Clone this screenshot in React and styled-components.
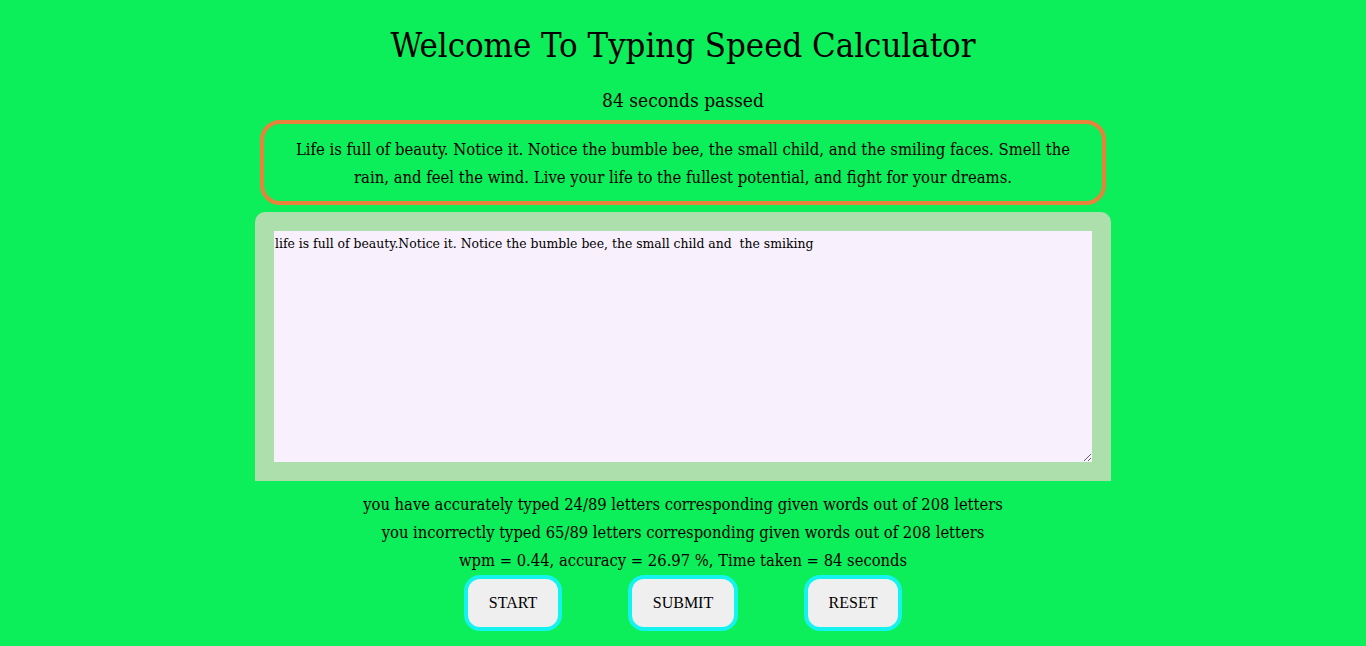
import React from "react";
import styled, { createGlobalStyle } from "styled-components";

const Global = createGlobalStyle`
  html, body { margin: 0; padding: 0; background: #0cef5b; }
  body { font-family: "DejaVu Serif", serif; font-stretch: condensed; color: #000; }
`;

const Page = styled.div`
  display: flex;
  flex-direction: column;
  align-items: center;
  padding-top: 22px;
`;

const Title = styled.h1`
  margin: 0;
  font-size: 34.4px;
  font-weight: 400;
  line-height: 46px;
`;

const Timer = styled.div`
  margin-top: 20px;
  font-size: 19px;
  line-height: 24px;
`;

const Quote = styled.div`
  margin-top: 8px;
  width: 846px;
  box-sizing: border-box;
  border: 4px solid #e8823a;
  border-radius: 20px;
  padding: 12px 28px 9px;
  text-align: center;
  font-size: 16.5px;
  line-height: 28px;
`;

const Panel = styled.div`
  margin-top: 7px;
  width: 856px;
  box-sizing: border-box;
  background: #addfad;
  border-radius: 10px 10px 0 0;
  padding: 19px;
  display: flex;
`;

const Area = styled.textarea`
  flex: 1;
  height: 231px;
  box-sizing: border-box;
  margin: 0;
  background: #f8f0fc;
  border: none;
  outline: none;
  padding: 3px 1px;
  font-family: "DejaVu Serif", serif;
  font-stretch: condensed;
  font-size: 13.8px;
  line-height: 18px;
  color: #000;
  resize: both;
`;

const Results = styled.div`
  margin-top: 10px;
  text-align: center;
  font-size: 16.4px;
  line-height: 28px;
`;

const Buttons = styled.div`
  display: flex;
  gap: 66px;
  margin-top: 0;
`;

const Btn = styled.button`
  height: 56px;
  padding: 0 20px;
  box-sizing: border-box;
  background: #efefef;
  border: 4px solid #14f3f0;
  border-radius: 16px;
  font-family: "Liberation Serif", serif;
  font-size: 16px;
  color: #000;
  width: ${(p) => p.w}px;
`;

export default function App() {
  return (
    <>
      <Global />
      <Page>
        <Title>Welcome To Typing Speed Calculator</Title>
        <Timer>84 seconds passed</Timer>
        <Quote>
          Life is full of beauty. Notice it. Notice the bumble bee, the small child, and the smiling faces. Smell the rain, and feel the wind. Live your life to the fullest potential, and fight for your dreams.
        </Quote>
        <Panel>
          <Area
            spellCheck={false}
            defaultValue="life is full of beauty.Notice it. Notice the bumble bee, the small child and  the smiking"
          />
        </Panel>
        <Results>
          <div>you have accurately typed 24/89 letters corresponding given words out of 208 letters</div>
          <div>you incorrectly typed 65/89 letters corresponding given words out of 208 letters</div>
          <div>wpm = 0.44, accuracy = 26.97 %, Time taken = 84 seconds</div>
        </Results>
        <Buttons>
          <Btn w={98}>START</Btn>
          <Btn w={110}>SUBMIT</Btn>
          <Btn w={98}>RESET</Btn>
        </Buttons>
      </Page>
    </>
  );
}
